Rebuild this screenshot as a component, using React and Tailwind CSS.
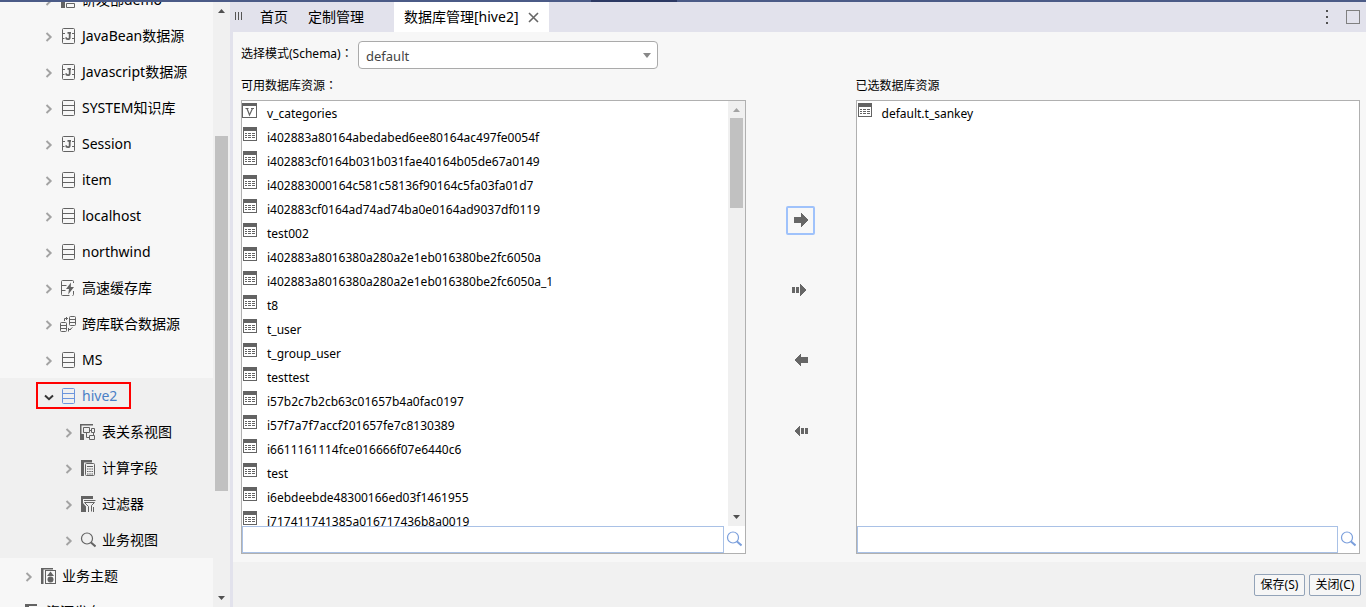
import React from "react";

const G = "#636363";

function Chevron({ open }) {
  return open ? (
    <svg width="10" height="10" viewBox="0 0 10 10" fill="none" stroke="#333" strokeWidth="2" className="shrink-0">
      <path d="M1 3.5 L5 7.2 L9 3.5" />
    </svg>
  ) : (
    <svg width="10" height="10" viewBox="0 0 10 10" fill="none" stroke="#a3a3a3" strokeWidth="1.9" className="shrink-0">
      <path d="M2.5 1 L6.700 5 L2.5 9" />
    </svg>
  );
}

const ICONS = {
  db: (c) => (
    <g fill="none" stroke={c}>
      <rect x="2.5" y=".5" width="12" height="15" rx="1" />
      <path d="M2.5 5.5h12M2.5 10.5h12" />
    </g>
  ),
  java: (c) => (
    <g fill="none" stroke={c}>
      <rect x="2.5" y=".5" width="12" height="15" rx="1" />
      <path d="M3 5.5h2M12 5.5h2M3 10.5h1.5M12 10.5h2" />
      <path d="M7.5 4.8H11M9.7 4.5V9.4Q9.7 11.2 7.8 11.2Q6.2 11.2 6 9.4" strokeWidth="1.8" />
    </g>
  ),
  cache: (c) => (
    <g fill="none" stroke={c}>
      <path d="M9.5 15.5H2.5a1 1 0 0 1-1-1v-13a1 1 0 0 1 1-1h10a1 1 0 0 1 1 1V3M1.5 5.5h5M1.5 10.5h4M13.5 11v3.5a1 1 0 0 1-1 1" />
      <path d="M11 2.5L6 9h3l-.8 5.5L14 7h-3.2z" fill={c} stroke="none" />
    </g>
  ),
  cross: (c) => (
    <g fill="none" stroke={c}>
      <rect x=".5" y="6.5" width="6" height="9" rx="1" />
      <path d="M.5 9.5h6M.5 12.5h6" />
      <rect x="9.5" y=".5" width="6" height="9" rx="1" />
      <path d="M9.5 3.5h6M9.5 6.5h6M4.5 5V2.500H8M6.500 1v3M12.500 11.500L10 13.500M8.500 12v3.500M8.500 13.500h2.500" />
    </g>
  ),
  relation: (c) => (
    <g fill="none" stroke={c}>
      <path d="M0 0h13v1.500H1.500V10H4v6H0z" fill={c} stroke="none" />
      <path d="M3.500 3.500h6v5h-6zM11.500 4.500h3v4h-3zM9.500 11.500h5v4h-5zM9.500 6.500h2M6.500 8.500v5h3M13.500 8.500v3" />
    </g>
  ),
  calc: (c) => (
    <g fill="none" stroke={c}>
      <path d="M1 0h11v2.500H4V16H1z" fill={c} stroke="none" />
      <rect x="5.500" y="3.500" width="9" height="12" rx="1" />
      <path d="M7 6.500h6" />
      <path d="M7 9h6M7 11.500h6M7 14h6" strokeDasharray="1.500 .75" />
    </g>
  ),
  filter: (c) => (
    <g fill="none" stroke={c}>
      <path d="M1 0h12v3H1zM1 3h2v4l3 3.500V16H1z" fill={c} stroke="none" />
      <path d="M4 4.500h11.500M4.500 6.500h10M4.500 6.500L8.500 10.500V16M14.500 6.500L11.500 9.500V15.500M13.500 11v5" />
    </g>
  ),
  search: (c) => (
    <g fill="none" stroke={c}>
      <circle cx="7" cy="6.500" r="5.500" strokeWidth="1.200" />
      <path d="M11 10.500l4.500 4" strokeWidth="2" />
    </g>
  ),
  theme: (c) => (
    <g fill="none" stroke={c}>
      <path d="M1 0h12v1.500H3.500V16H1z" fill={c} stroke="none" />
      <rect x="5.500" y="2.500" width="10" height="13" />
      <path d="M10.500 3.500L14 8H7z" fill={c} stroke="none" />
      <circle cx="10.500" cy="11.500" r="3" fill={c} stroke="none" />
    </g>
  ),
  group: (c) => (
    <g fill="none" stroke={c}>
      <path d="M1 0h12v2H5v14H1z" fill={c} stroke="none" />
      <path d="M6.500 11.500h8v4h-8z" />
      <path d="M6.500 4.500h8v4h-8z" />
    </g>
  ),
};

function Icon({ name, color = G }) {
  return (
    <svg width="16" height="16" viewBox="0 0 16 16" className="shrink-0">
      {ICONS[name](color)}
    </svg>
  );
}

const TREE = [
  { icon: "group", label: "研发部demo", level: 2 },
  { icon: "java", label: "JavaBean数据源", level: 2 },
  { icon: "java", label: "Javascript数据源", level: 2 },
  { icon: "db", label: "SYSTEM知识库", level: 2 },
  { icon: "java", label: "Session", level: 2 },
  { icon: "db", label: "item", level: 2 },
  { icon: "db", label: "localhost", level: 2 },
  { icon: "db", label: "northwind", level: 2 },
  { icon: "cache", label: "高速缓存库", level: 2 },
  { icon: "cross", label: "跨库联合数据源", level: 2 },
  { icon: "db", label: "MS", level: 2 },
  { icon: "db", label: "hive2", level: 2, open: true },
  { icon: "relation", label: "表关系视图", level: 3, shade: true },
  { icon: "calc", label: "计算字段", level: 3, shade: true },
  { icon: "filter", label: "过滤器", level: 3, shade: true },
  { icon: "search", label: "业务视图", level: 3, shade: true },
  { icon: "theme", label: "业务主题", level: 1 },
  { icon: "group", label: "资源发布", level: 0 },
];

const INDENT = ["pl-2", "pl-6", "pl-11", "pl-16"];

function TreeRow({ item }) {
  const shade = item.open || item.shade;
  return (
    <li className={`relative flex h-9 shrink-0 items-center ${INDENT[item.level]} ${shade ? "bg-[#f0f0f0]" : ""}`}>
      <span className="flex pt-0.5">
        <Chevron open={item.open} />
      </span>
      <span className="mx-1.5 flex">
        <Icon name={item.icon} color={item.open ? "#6c95dc" : G} />
      </span>
      <span className={`whitespace-nowrap text-sm ${item.open ? "text-[#4a7fc6]" : "text-black"}`}>{item.label}</span>
      {item.open && <span className="absolute left-9 top-1 h-[27px] w-[95px] border-2 border-[#f00]" />}
    </li>
  );
}

function Scrollbar({ before, thumb, faint }) {
  return (
    <div className="flex w-[17px] shrink-0 flex-col items-center bg-[#f0f0f0]">
      <svg width="17" height="17" viewBox="0 0 17 17" className="shrink-0">
        <path d="M5 11L8.500 7L12 11z" fill={faint ? "#a3a3a3" : "#505050"} />
      </svg>
      <div className={`flex w-[13px] flex-1 flex-col ${before}`}>
        <div className={`bg-[#c1c1c1] ${thumb}`} />
      </div>
      <svg width="17" height="17" viewBox="0 0 17 17" className="shrink-0">
        <path d="M5 6L8.500 10L12 6z" fill="#505050" />
      </svg>
    </div>
  );
}

const RESOURCES = [
  "v_categories",
  "i402883a80164abedabed6ee80164ac497fe0054f",
  "i402883cf0164b031b031fae40164b05de67a0149",
  "i402883000164c581c58136f90164c5fa03fa01d7",
  "i402883cf0164ad74ad74ba0e0164ad9037df0119",
  "test002",
  "i402883a8016380a280a2e1eb016380be2fc6050a",
  "i402883a8016380a280a2e1eb016380be2fc6050a_1",
  "t8",
  "t_user",
  "t_group_user",
  "testtest",
  "i57b2c7b2cb63c01657b4a0fac0197",
  "i57f7a7f7accf201657fe7c8130389",
  "i6611161114fce016666f07e6440c6",
  "test",
  "i6ebdeebde48300166ed03f1461955",
  "i717411741385a016717436b8a0019",
];

function ResourceRow({ name }) {
  return (
    <li className="flex h-6 shrink-0 text-xs leading-[26px] text-black">
      <svg width="16" height="16" viewBox="0 0 16 16" className="mr-[9px] mt-0.5 shrink-0">
        {name.startsWith("v_") ? (
          <g fill="none" stroke={G}>
            <rect x=".5" y=".5" width="14" height="14" />
            <path d="M0 1.500h15" strokeWidth="3" />
            <path d="M3.500 5.500h3M9 5.500h3M5 5.500L7.500 12L10.500 5.500" strokeWidth="1.200" />
          </g>
        ) : (
          <g fill="none" stroke={G}>
            <rect x="1.500" y=".5" width="13" height="13" />
            <path d="M1 2h14" strokeWidth="4" />
            <path d="M3 6.500h2m1 0h3m1 0h3M3 8.500h2m1 0h3m1 0h3M3 10.500h2m1 0h3m1 0h3" />
          </g>
        )}
      </svg>
      <span className="whitespace-nowrap">{name}</span>
    </li>
  );
}

function Colon() {
  return <span className="font-['Noto_Sans_CJK_TC',sans-serif] leading-none" lang="zh-TW">：</span>;
}

function ResourceBox({ id, title, colon, items, scroll }) {
  return (
    <section className="flex min-h-0 min-w-0 flex-1 flex-col">
      <h2 className="mb-1 mt-2 h-[19px] text-xs leading-[18px] text-black">
        <label htmlFor={id}>
          {title}
          {colon && <Colon />}
        </label>
      </h2>
      <div className="flex min-h-0 flex-1 flex-col border border-[#b0b0b0] bg-white">
        <div className="flex min-h-0 flex-1">
          <ul className="flex min-w-0 flex-1 flex-col overflow-hidden">
            {items.map((n) => (
              <ResourceRow key={n} name={n} />
            ))}
          </ul>
          {scroll && <Scrollbar before="" thumb="h-[90px]" faint />}
        </div>
        <div className="flex h-[27px] shrink-0 items-center">
          <input
            id={id}
            className="h-[27px] min-w-0 flex-1 border border-[#a9c1e6] bg-white px-1 text-xs outline-none"
          />
          <button type="button" aria-label="搜索" className="flex w-[21px] shrink-0 pb-0.5 pl-0.5">
            <Icon name="search" color="#7b9fdc" />
          </button>
        </div>
      </div>
    </section>
  );
}

const MOVES = [
  { label: "添加", d: "M2 6h7V2l7 7-7 7v-4H2z", focus: true },
  { label: "全部添加", d: "M0 6h3v6H0zM4 6h3v6H4zM8 3l6 6-6 6z" },
  { label: "移除", d: "M16 6H9V2L2 9l7 7v-4h7z" },
  { label: "全部移除", d: "M16 7h-3v6h3zM12 7H9v6h3zM8 4L2 10l6 6z" },
];

export default function App() {
  return (
    <div className="flex h-screen flex-col overflow-hidden bg-[#f7f7f7] font-['Noto_Sans','Noto_Sans_CJK_SC',sans-serif]">
      <div className="flex h-0.5 shrink-0 bg-[#4b5b87] pl-[591px]">
        <div className="h-0.5 w-[86px] bg-[#2c3963]" />
      </div>
      <div className="flex min-h-0 flex-1">
        <aside className="flex w-[233px] shrink-0 border-r-[3px] border-[#e2e2ec]">
          <div className="min-w-0 flex-1 overflow-hidden">
            <ul className="-mt-5">
              {TREE.map((t) => (
                <TreeRow key={t.label} item={t} />
              ))}
            </ul>
          </div>
          <Scrollbar before="pt-[117px]" thumb="h-[355px]" />
        </aside>
        <main className="flex min-w-0 flex-1 flex-col">
          <nav className="flex h-[30px] shrink-0 items-center bg-[#e2e2ec] text-sm text-black">
            <svg width="10" height="10" viewBox="0 0 10 10" className="ml-px shrink-0" stroke="#555">
              <path d="M1.500 0v8M4.500 0v8M7.500 0v8" />
            </svg>
            <a href="#home" className="ml-4">首页</a>
            <a href="#custom" className="ml-5">定制管理</a>
            <div className="ml-[30px] flex h-full w-[155px] items-center justify-between bg-white px-2.5">
              <a href="#hive2" className="whitespace-nowrap">数据库管理[hive2]</a>
              <button type="button" aria-label="关闭标签">
                <svg width="11" height="11" viewBox="0 0 11 11" stroke="#666" strokeWidth="1.600">
                  <path d="M1 1l9 9M10 1l-9 9" />
                </svg>
              </button>
            </div>
            <button type="button" aria-label="更多" className="ml-auto mr-[17px]">
              <svg width="4" height="14" viewBox="0 0 4 14" fill="#505050">
                <path d="M1 0h2v2H1zM1 6h2v2H1zM1 12h2v2H1z" />
              </svg>
            </button>
            <button type="button" aria-label="最大化" className="mr-1.5 h-3.5 w-3.5 border border-[#808080]" />
          </nav>
          <div className="flex min-h-0 flex-1 flex-col pb-2 pl-2 pr-1.5 pt-[9px]">
            <div className="flex h-7 shrink-0 items-center">
              <label htmlFor="schema" className="w-[117px] shrink-0 whitespace-nowrap pb-0.5 text-xs leading-[18px] text-black">
                选择模式(Schema)
                <Colon />
              </label>
              <div className="relative w-[300px]">
                <select
                  id="schema"
                  className="block h-7 w-full appearance-none rounded border border-[#aaa] bg-white px-[7px] pt-1 text-[13px] text-[#444] outline-none"
                >
                  <option>default</option>
                </select>
                <svg width="8" height="5" viewBox="0 0 8 5" className="pointer-events-none absolute right-[7px] top-3">
                  <path d="M0 0h8L4 5z" fill="#888" />
                </svg>
              </div>
            </div>
            <div className="flex min-h-0 flex-1">
              <ResourceBox id="available" title="可用数据库资源" colon items={RESOURCES} scroll />
              <div className="flex w-[110px] shrink-0 flex-col items-center gap-[41px] pt-[137px]">
                {MOVES.map((m) => (
                  <button
                    key={m.label}
                    type="button"
                    aria-label={m.label}
                    className={`flex h-[29px] w-[29px] shrink-0 items-center justify-center rounded-xs border-2 ${
                      m.focus ? "border-[#9fc2fb]" : "border-transparent"
                    }`}
                  >
                    <svg width="18" height="18" viewBox="0 1 18 18" fill="#666" shapeRendering="crispEdges">
                      <path d={m.d} />
                    </svg>
                  </button>
                ))}
              </div>
              <ResourceBox id="selected" title="已选数据库资源" items={["default.t_sankey"]} />
            </div>
          </div>
          <footer className="flex h-[45px] shrink-0 items-center justify-end gap-1 bg-[#f1f1f1] pr-[5px] text-xs text-black">
            <button type="button" className="h-[22px] w-[51px] whitespace-nowrap rounded-xs border border-[#93a3b8] bg-[#f6f6f6]">
              保存(S)
            </button>
            <button type="button" className="h-[22px] w-[52px] whitespace-nowrap rounded-xs border border-[#93a3b8] bg-[#f6f6f6]">
              关闭(C)
            </button>
          </footer>
        </main>
      </div>
    </div>
  );
}
